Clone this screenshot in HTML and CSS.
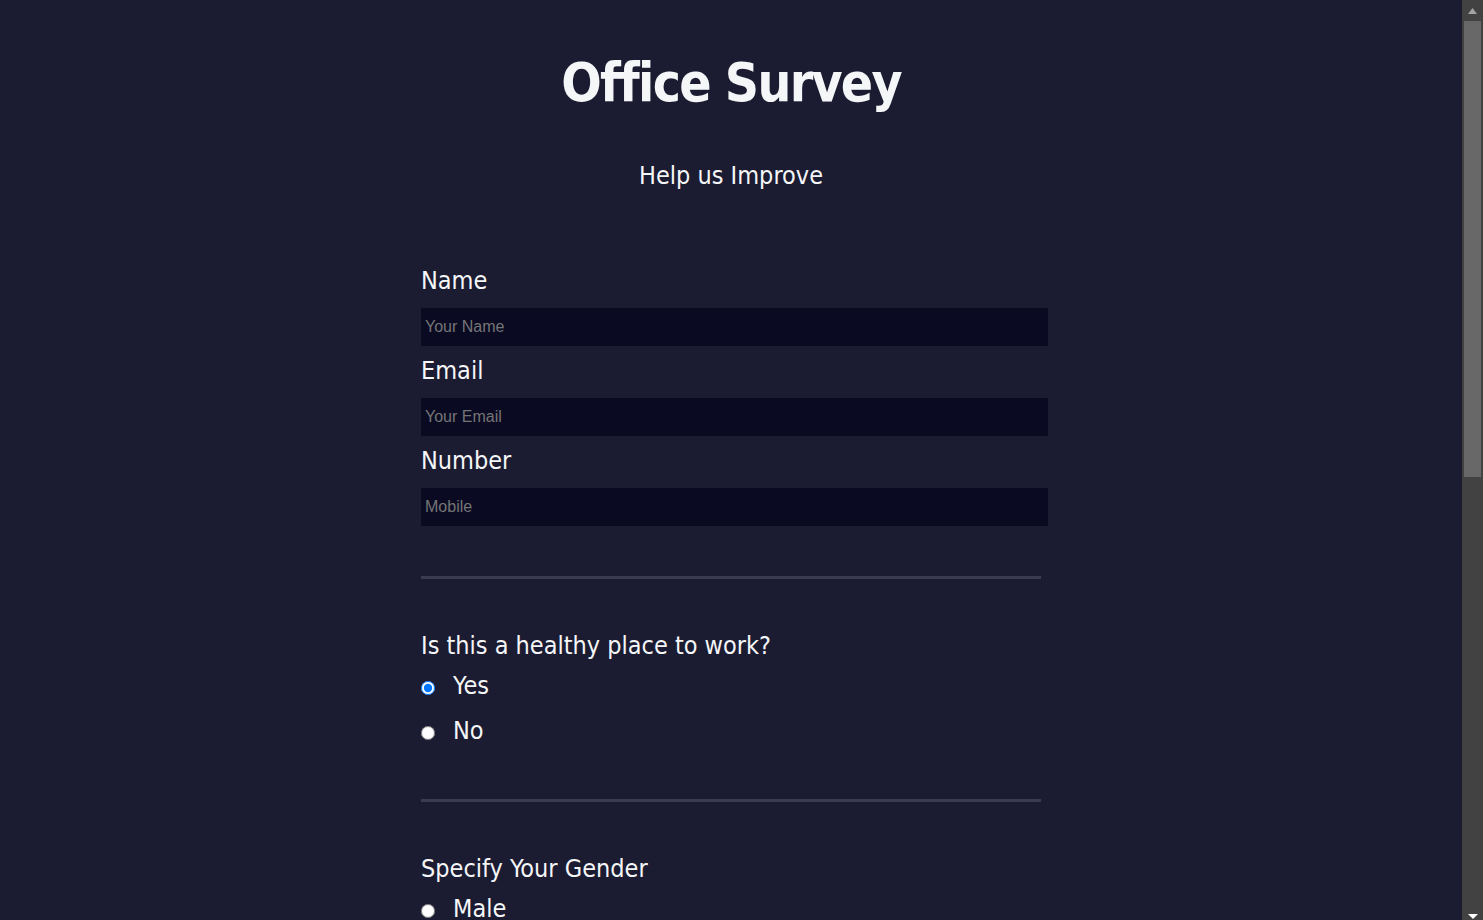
FILE: index.html
```html
<!DOCTYPE html>
<html lang="en">
<head>
<meta charset="utf-8">
<title>Office Survey</title>
<link rel="stylesheet" href="styles.css">
</head>
<body>
<header class="header">
  <h1 class="title">Office Survey</h1>
  <p class="subtitle">Help us Improve</p>
</header>
<form class="survey">
  <section class="group">
    <label class="label" for="name">Name</label>
    <input class="field" id="name" type="text" placeholder="Your Name">
    <label class="label" for="email">Email</label>
    <input class="field" id="email" type="email" placeholder="Your Email">
    <label class="label" for="number">Number</label>
    <input class="field" id="number" type="tel" placeholder="Mobile">
  </section>
  <hr class="rule rule-first">
  <section class="group">
    <p class="question">Is this a healthy place to work?</p>
    <label class="option"><input class="radio" type="radio" name="healthy" checked><span>Yes</span></label>
    <label class="option"><input class="radio" type="radio" name="healthy"><span>No</span></label>
  </section>
  <hr class="rule">
  <section class="group">
    <p class="question">Specify Your Gender</p>
    <label class="option"><input class="radio" type="radio" name="gender"><span>Male</span></label>
    <label class="option"><input class="radio" type="radio" name="gender"><span>Female</span></label>
    <label class="option"><input class="radio" type="radio" name="gender"><span>Other</span></label>
  </section>
  <hr class="rule">
  <section class="group">
    <p class="question">What would you like to see improved?</p>
    <label class="option"><input class="radio" type="checkbox"><span>Workspace</span></label>
    <label class="option"><input class="radio" type="checkbox"><span>Management</span></label>
    <label class="option"><input class="radio" type="checkbox"><span>Facilities</span></label>
  </section>
  <hr class="rule">
  <section class="group">
    <p class="question">Any comments or suggestions?</p>
    <textarea class="comments" placeholder="Enter your comment here..."></textarea>
    <button class="submit" type="submit">Submit</button>
  </section>
</form>
<div class="scrollbar" aria-hidden="true">
  <svg class="arrow arrow-up" width="9" height="6" viewBox="0 0 9 6"><polygon points="0,6 9,6 4.5,0" fill="#a3a3a3"/></svg>
  <div class="thumb"></div>
  <svg class="arrow arrow-down" width="10" height="5" viewBox="0 0 10 5"><polygon points="0,0 10,0 5,5" fill="#ffffff"/></svg>
</div>
</body>
</html>
```
FILE: styles.css
```css
html {
  background: #1b1b32;
}

body {
  margin: 0 21px 0 0;
  background: #1b1b32;
  color: #f5f6f7;
  font-family: "DejaVu Sans Condensed", "DejaVu Sans", sans-serif;
}

.header {
  text-align: center;
  padding-top: 51px;
}

.title {
  margin: 0;
  font-size: 53px;
  line-height: 64px;
  font-weight: bold;
  letter-spacing: -1.7px;
}

.subtitle {
  margin: 47px 0 0;
  font-size: 25px;
  line-height: 28px;
}

.survey {
  width: 620px;
  margin: 77px auto 0;
  padding-bottom: 60px;
}

.group {
  display: flex;
  flex-direction: column;
  align-items: flex-start;
}

.label {
  font-size: 25px;
  line-height: 28px;
}

.field {
  box-sizing: content-box;
  width: 100%;
  height: 38px;
  margin: 13px 0 11px;
  padding: 0 3px 0 4px;
  border: none;
  background: #0a0a23;
  color: #f5f6f7;
  font-family: "Liberation Sans", Arial, sans-serif;
  font-size: 16px;
  outline: none;
}

.field::placeholder,
.comments::placeholder {
  color: #757575;
}

.rule {
  width: 100%;
  height: 3px;
  margin: 54px 0 0;
  border: none;
  background: #3b3b4f;
}

.rule-first {
  margin-top: 39px;
}

.question {
  margin: 53px 0 12px;
  font-size: 25px;
  line-height: 28px;
}

.option {
  display: flex;
  align-items: center;
  height: 28px;
  margin-bottom: 17px;
  font-size: 25px;
  line-height: 28px;
}

.option:last-child {
  margin-bottom: 0;
}

.radio {
  width: 14px;
  height: 14px;
  margin: 3px 18px 0 0;
}

.comments {
  box-sizing: border-box;
  width: 100%;
  height: 120px;
  padding: 4px;
  border: none;
  background: #0a0a23;
  color: #f5f6f7;
  font-family: "Liberation Sans", Arial, sans-serif;
  font-size: 16px;
  resize: vertical;
}

.submit {
  width: 100%;
  height: 40px;
  margin-top: 30px;
  border: none;
  background: #3b3b4f;
  color: #f5f6f7;
  font-family: inherit;
  font-size: 20px;
}

.scrollbar {
  position: fixed;
  top: 0;
  right: 0;
  width: 21px;
  height: 100vh;
  background: #424242;
  display: flex;
  flex-direction: column;
  align-items: center;
}

.arrow {
  display: block;
  flex: none;
}

.arrow-up {
  margin-top: 8px;
}

.thumb {
  flex: none;
  width: 17px;
  height: 456px;
  margin-top: 7px;
  background: #686868;
}

.arrow-down {
  margin-top: auto;
  margin-bottom: 1px;
}
```
